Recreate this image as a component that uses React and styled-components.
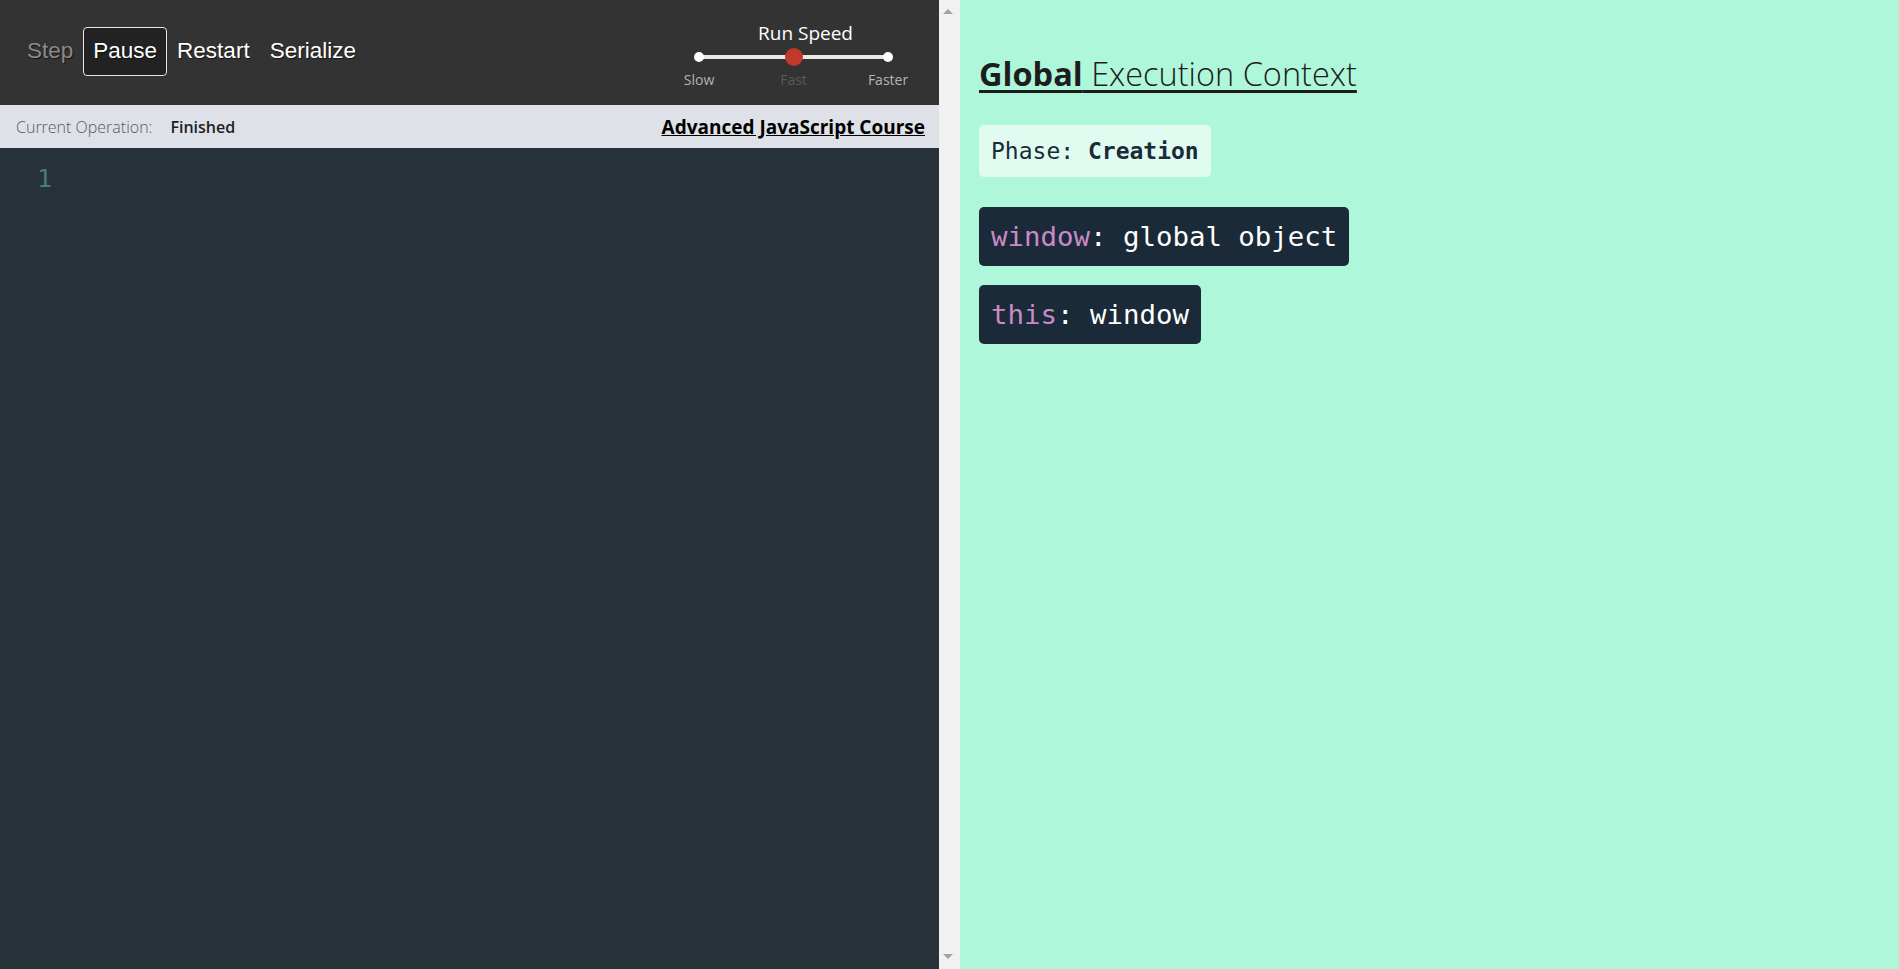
import React from 'react';
import styled, { createGlobalStyle } from 'styled-components';

const GlobalStyle = createGlobalStyle`
  html, body {
    margin: 0;
    padding: 0;
    height: 100%;
    overflow: hidden;
  }
  #root {
    height: 100%;
  }
`;

const Page = styled.div`
  display: flex;
  height: 969px;
  width: 100%;
  font-family: "Open Sans", "Noto Sans", sans-serif;
`;

const LeftPanel = styled.div`
  width: 939px;
  flex: none;
  display: flex;
  flex-direction: column;
  background: #263238;
`;

const Toolbar = styled.div`
  height: 105px;
  flex: none;
  background: #333333;
  display: flex;
  align-items: center;
  justify-content: space-between;
  padding: 0 21px 0 17px;
  box-sizing: border-box;
`;

const Buttons = styled.div`
  display: flex;
  align-items: center;
  margin-top: -2px;
`;

const ToolButton = styled.button`
  font-family: "Liberation Sans", Arial, sans-serif;
  font-size: 22.5px;
  line-height: 1;
  color: ${p => (p.disabled ? '#8a8a8a' : '#ffffff')};
  background: ${p => (p.active ? '#222222' : 'transparent')};
  border: 1px solid ${p => (p.active ? '#e6e6e6' : 'transparent')};
  border-radius: 4px;
  padding: 12px 9px 12px;
  text-shadow: 1px 1px 1px rgba(0, 0, 0, 0.6);
  cursor: pointer;
`;

const Speed = styled.div`
  display: flex;
  flex-direction: column;
  align-items: center;
  width: 249px;
  margin-top: 5px;
`;

const SpeedTitle = styled.div`
  color: #ffffff;
  font-size: 19px;
  line-height: 24px;
  margin-left: 24px;
`;

const Track = styled.div`
  position: relative;
  width: 189px;
  height: 4px;
  background: #e8e8e8;
  margin: 10px 0 11px;
`;

const Dot = styled.span`
  position: absolute;
  top: 50%;
  left: ${p => p.pos}%;
  width: ${p => (p.knob ? 18 : 10)}px;
  height: ${p => (p.knob ? 18 : 10)}px;
  border-radius: 50%;
  background: ${p => (p.knob ? '#c0392b' : '#ffffff')};
  transform: translate(-50%, -50%);
`;

const Labels = styled.div`
  width: 249px;
  display: flex;
  justify-content: space-between;
`;

const Label = styled.span`
  font-size: 14px;
  color: ${p => (p.dim ? '#5a5a5a' : '#b4b4b4')};
  width: 60px;
  text-align: center;
`;

const OpBar = styled.div`
  height: 43px;
  flex: none;
  background: #dee1e8;
  display: flex;
  align-items: center;
  padding: 0 14px 0 16px;
  box-sizing: border-box;
`;

const OpLabel = styled.span`
  font-size: 16px;
  font-weight: 300;
  color: #555a60;
  margin-right: 18px;
`;

const OpValue = styled.span`
  font-size: 16px;
  font-weight: 600;
  color: #1e1e24;
`;

const CourseLink = styled.a`
  margin-left: auto;
  font-size: 19px;
  font-weight: 700;
  color: #000000;
  text-decoration: underline;
`;

const Editor = styled.div`
  flex: 1;
  padding: 16px 0 0 37px;
  font-family: "DejaVu Sans Mono", monospace;
  font-size: 25px;
  color: #4b7c79;
`;

const Scrollbar = styled.div`
  width: 21px;
  flex: none;
  background: #f1f1f1;
  display: flex;
  flex-direction: column;
  justify-content: space-between;
  align-items: center;
  padding: 9px 4px 0 0;
  box-sizing: border-box;
`;

const Arrow = styled.span`
  width: 0;
  height: 0;
  border-left: 5px solid transparent;
  border-right: 5px solid transparent;
  ${p => (p.down ? 'border-top: 5px solid #a3a3a3; margin-bottom: 10px;' : 'border-bottom: 5px solid #a3a3a3;')}
`;

const RightPanel = styled.div`
  flex: 1;
  background: #aff7db;
  padding: 50px 19px;
  box-sizing: border-box;
`;

const Heading = styled.h1`
  margin: 0 0 27px;
  font-size: 32.5px;
  font-weight: 300;
  color: #1d1d1d;
  text-decoration: underline;
  text-decoration-thickness: 3px;
  text-underline-offset: 4px;
  line-height: 48px;
  b {
    font-weight: 700;
  }
`;

const Stack = styled.div`
  display: flex;
  flex-direction: column;
  align-items: flex-start;
  gap: 19px;
`;

const Chip = styled.div`
  font-family: "DejaVu Sans Mono", monospace;
  font-size: ${p => (p.light ? 23 : 27.4)}px;
  line-height: ${p => (p.light ? 52 : 59)}px;
  padding: 0 12px;
  border-radius: 5px;
  background: ${p => (p.light ? '#e0fbf0' : '#1b2a38')};
  color: ${p => (p.light ? '#1b2a38' : '#ffffff')};
  margin-bottom: ${p => (p.light ? 11 : 0)}px;
  b {
    font-weight: 700;
  }
`;

const Key = styled.span`
  color: #c98bc7;
`;

export default function App() {
  return (
    <>
      <GlobalStyle />
      <Page>
        <LeftPanel>
          <Toolbar>
            <Buttons>
              <ToolButton disabled>Step</ToolButton>
              <ToolButton active>Pause</ToolButton>
              <ToolButton>Restart</ToolButton>
              <ToolButton>Serialize</ToolButton>
            </Buttons>
            <Speed>
              <SpeedTitle>Run Speed</SpeedTitle>
              <Track>
                <Dot pos={0} />
                <Dot pos={50} knob />
                <Dot pos={100} />
              </Track>
              <Labels>
                <Label>Slow</Label>
                <Label dim>Fast</Label>
                <Label>Faster</Label>
              </Labels>
            </Speed>
          </Toolbar>
          <OpBar>
            <OpLabel>Current Operation:</OpLabel>
            <OpValue>Finished</OpValue>
            <CourseLink href="#">Advanced JavaScript Course</CourseLink>
          </OpBar>
          <Editor>1</Editor>
        </LeftPanel>
        <Scrollbar>
          <Arrow />
          <Arrow down />
        </Scrollbar>
        <RightPanel>
          <Heading>
            <b>Global</b> Execution Context
          </Heading>
          <Stack>
            <Chip light>
              Phase: <b>Creation</b>
            </Chip>
            <Chip>
              <Key>window</Key>: global object
            </Chip>
            <Chip>
              <Key>this</Key>: window
            </Chip>
          </Stack>
        </RightPanel>
      </Page>
    </>
  );
}
